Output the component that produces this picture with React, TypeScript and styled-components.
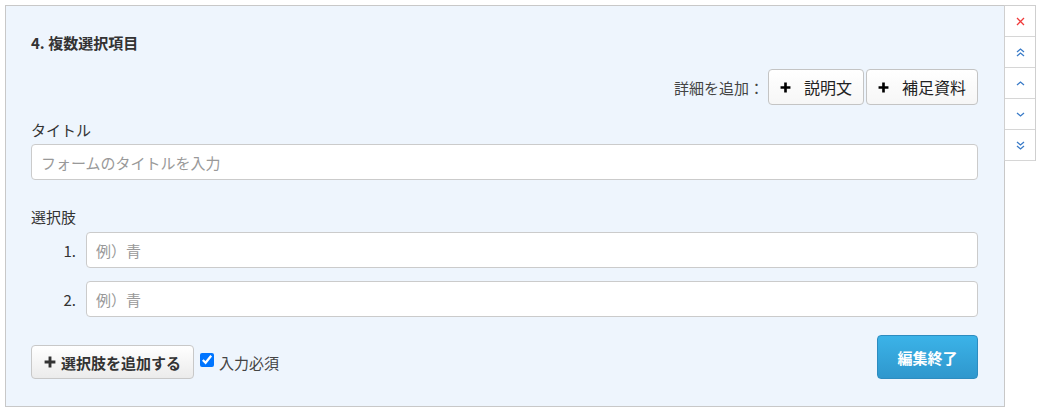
import { createGlobalStyle, styled } from 'styled-components';

const GlobalStyle = createGlobalStyle`
  html, body {
    margin: 0;
    padding: 0;
    background: #fff;
  }
  body {
    font-family: "Noto Sans CJK JP", "Noto Sans", sans-serif;
    font-size: 15px;
    color: #333;
  }
  * {
    box-sizing: border-box;
  }
`;

const Plus = ({ size = 11 }: { size?: number }) => (
  <svg width={size} height={size} viewBox='0 0 10 10'>
    <path d='M5 0.5 V9.5 M0.5 5 H9.5' stroke='currentColor' strokeWidth='2.4' />
  </svg>
);

const Chevron = ({ dir, double }: { dir: 'up' | 'down'; double?: boolean }) => {
  const up = dir === 'up';
  const one = (y: number) => (up ? `M1 ${y + 3} L4.5 ${y} L8 ${y + 3}` : `M1 ${y} L4.5 ${y + 3} L8 ${y}`);
  return (
    <svg width='9' height='9' viewBox='0 0 9 9'>
      {double ? (
        <path d={`${one(1)} ${one(5)}`} stroke='#3a7bc8' strokeWidth='1.3' fill='none' />
      ) : (
        <path d={one(3)} stroke='#3a7bc8' strokeWidth='1.3' fill='none' />
      )}
    </svg>
  );
};

const App = () => {
  return (
    <>
      <GlobalStyle />
      <Page>
        <Panel>
          <Heading>4. 複数選択項目</Heading>
          <Actions>
            <span>詳細を追加：</span>
            <DetailButton>
              <Plus />
              説明文
            </DetailButton>
            <DetailButton>
              <Plus />
              補足資料
            </DetailButton>
          </Actions>

          <Label>タイトル</Label>
          <Input placeholder='フォームのタイトルを入力' />

          <Label $spaced>選択肢</Label>
          <Options>
            {[1, 2].map((n) => (
              <OptionRow key={n}>
                <Num>{n}.</Num>
                <Input placeholder='例）青' />
              </OptionRow>
            ))}
          </Options>

          <Footer>
            <FooterLeft>
              <AddButton>
                <Plus size={12} />
                選択肢を追加する
              </AddButton>
              <Check>
                <input type='checkbox' defaultChecked />
                入力必須
              </Check>
            </FooterLeft>
            <DoneButton>編集終了</DoneButton>
          </Footer>
        </Panel>

        <Toolbar>
          <ToolCell>
            <svg width='9' height='9' viewBox='0 0 9 9'>
              <path d='M1 1 L8 8 M8 1 L1 8' stroke='#f03a3a' strokeWidth='1.3' />
            </svg>
          </ToolCell>
          <ToolCell>
            <Chevron dir='up' double />
          </ToolCell>
          <ToolCell>
            <Chevron dir='up' />
          </ToolCell>
          <ToolCell>
            <Chevron dir='down' />
          </ToolCell>
          <ToolCell>
            <Chevron dir='down' double />
          </ToolCell>
        </Toolbar>
      </Page>
    </>
  );
};

export default App;

const Page = styled.div`
  display: flex;
  align-items: flex-start;
  padding: 5px 0 0 5px;
`;

const Panel = styled.div`
  width: 1000px;
  height: 402px;
  border: 1px solid #c8c8c8;
  background: #eef5fd;
  padding: 27px 26px 0 25px;
  display: flex;
  flex-direction: column;
`;

const Heading = styled.h4`
  margin: 0;
  font-size: 15px;
  line-height: 20px;
  font-weight: bold;
  color: #333;
`;

const Actions = styled.div`
  margin-top: 16px;
  display: flex;
  justify-content: flex-end;
  align-items: center;
  gap: 2px;
  color: #444;
  span {
    margin-right: 2px;
  }
`;

const DetailButton = styled.button`
  height: 36px;
  padding: 0 11px 0 11px;
  display: flex;
  align-items: center;
  gap: 13px;
  font-family: inherit;
  font-size: 16px;
  color: #222;
  background: linear-gradient(#ffffff, #f6f6f6);
  border: 1px solid #c4c4c4;
  border-radius: 4px;
  svg {
    color: #000;
  }
`;

const Label = styled.div<{ $spaced?: boolean }>`
  margin-top: ${(p) => (p.$spaced ? '27px' : '15px')};
  margin-bottom: ${(p) => (p.$spaced ? '5px' : '4px')};
  line-height: 20px;
  color: #333;
`;

const Input = styled.input`
  display: block;
  width: 100%;
  height: 36px;
  padding: 0 9px;
  font-family: inherit;
  font-size: 15px;
  color: #333;
  background: #fff;
  border: 1px solid #cbcbcb;
  border-radius: 4px;
  &::placeholder {
    color: #999;
  }
`;

const Options = styled.div`
  display: flex;
  flex-direction: column;
  gap: 13px;
`;

const OptionRow = styled.div`
  display: flex;
  align-items: center;
  ${Input} {
    flex: 1;
    width: auto;
  }
`;

const Num = styled.span`
  width: 45px;
  margin-right: 10px;
  text-align: right;
  color: #333;
`;

const Footer = styled.div`
  margin-top: 18px;
  display: flex;
  justify-content: space-between;
  align-items: flex-end;
`;

const FooterLeft = styled.div`
  display: flex;
  align-items: center;
`;

const AddButton = styled.button`
  width: 163px;
  height: 34px;
  padding: 0;
  display: flex;
  align-items: center;
  justify-content: center;
  gap: 5px;
  font-family: inherit;
  font-size: 15px;
  font-weight: bold;
  color: #333;
  background: linear-gradient(#ffffff, #ebebeb);
  border: 1px solid #c8c8c8;
  border-radius: 4px;
`;

const Check = styled.label`
  margin-left: 6px;
  display: flex;
  align-items: center;
  gap: 5px;
  color: #444;
  input {
    margin: 0;
    width: 14px;
    height: 14px;
    position: relative;
    top: -2px;
  }
`;

const DoneButton = styled.button`
  width: 101px;
  height: 44px;
  font-family: inherit;
  font-size: 15px;
  font-weight: bold;
  color: #fff;
  background: linear-gradient(#3bb3e8, #2f97cd);
  border: 1px solid #2d8cc0;
  border-radius: 4px;
`;

const Toolbar = styled.div`
  width: 32px;
  margin-left: -1px;
  border: 1px solid #cfcfcf;
  border-bottom: none;
  background: #fff;
  display: flex;
  flex-direction: column;
`;

const ToolCell = styled.div`
  height: 31px;
  display: flex;
  align-items: center;
  justify-content: center;
  border-bottom: 1px solid #d6d6d6;
`;
